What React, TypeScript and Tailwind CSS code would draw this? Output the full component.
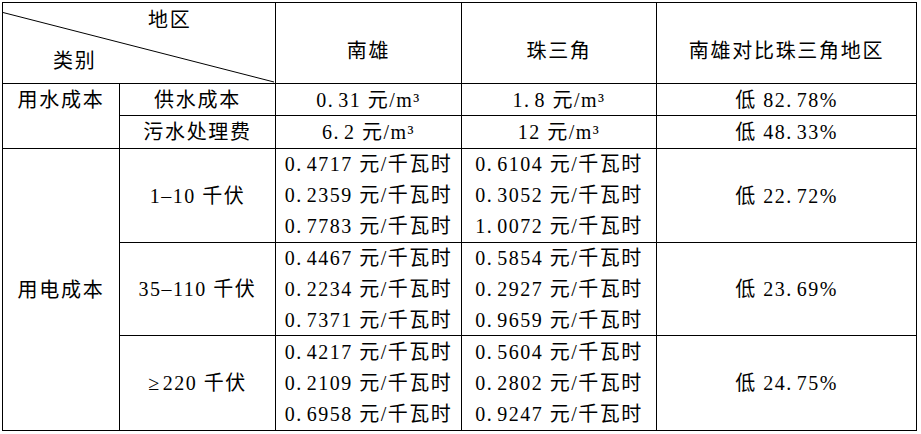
import React from "react";

const font = {
  fontFamily: '"Liberation Serif", "Noto Sans CJK SC", serif',
};

function Num({ text }: { text: string }) {
  const parts = text.split(".");
  if (parts.length === 1) return <>{text}</>;
  return (
    <>
      {parts[0]}
      <span className="tracking-[5.5px]">.</span>
      {parts.slice(1).join(".")}
    </>
  );
}

function Cell({
  className = "",
  children,
}: {
  className?: string;
  children?: React.ReactNode;
}) {
  return (
    <div
      className={
        "bg-white flex items-center justify-center text-center whitespace-nowrap " +
        className
      }
    >
      {children}
    </div>
  );
}

function Lines({ items }: { items: string[] }) {
  return (
    <div className="flex flex-col items-center leading-[31px]">
      {items.map((t) => (
        <div key={t} className="whitespace-nowrap">
          <Num text={t} />
        </div>
      ))}
    </div>
  );
}

export default function App() {
  return (
    <div
      className="bg-white w-[921px] h-[434px] pt-[2px] pl-[2px] text-black text-[20px] tracking-[1.5px]"
      style={font}
    >
      <div className="grid w-[915px] bg-black p-px gap-px grid-cols-[116px_155px_185px_194px_259px] grid-rows-[80px_31px_32px_93px_92px_94px]">
        {/* header diagonal cell */}
        <div className="col-span-2 bg-white relative">
          <svg
            className="absolute inset-0"
            width="271"
            height="80"
            viewBox="0 0 271 80"
          >
            <line
              x1="0"
              y1="9.5"
              x2="271"
              y2="79"
              stroke="black"
              strokeWidth="1"
            />
          </svg>
          <div className="relative flex flex-col leading-[20px] tracking-[1.7px]">
            <div className="pl-[145px] pt-[7px]">地区</div>
            <div className="pl-[50px] pt-[21px]">类别</div>
          </div>
        </div>
        <Cell className="pt-[15px] tracking-[1.7px]">南雄</Cell>
        <Cell className="pt-[15px] tracking-[1.7px]">珠三角</Cell>
        <Cell className="pt-[15px] tracking-[1.7px]">南雄对比珠三角地区</Cell>

        {/* water */}
        <div className="row-span-2 bg-white flex justify-center pt-[3px] leading-[26px] tracking-[1.7px]">
          用水成本
        </div>
        <Cell className="tracking-[1.7px]">供水成本</Cell>
        <Cell>
          <Num text="0.31 元/m³" />
        </Cell>
        <Cell>
          <Num text="1.8 元/m³" />
        </Cell>
        <Cell>
          <Num text="低 82.78%" />
        </Cell>

        <Cell className="tracking-[1.7px]">污水处理费</Cell>
        <Cell>
          <Num text="6.2 元/m³" />
        </Cell>
        <Cell>12 元/m³</Cell>
        <Cell>
          <Num text="低 48.33%" />
        </Cell>

        {/* electricity */}
        <Cell className="row-span-3 tracking-[1.7px]">用电成本</Cell>
        <Cell>1–10 千伏</Cell>
        <Cell>
          <Lines
            items={["0.4717 元/千瓦时", "0.2359 元/千瓦时", "0.7783 元/千瓦时"]}
          />
        </Cell>
        <Cell>
          <Lines
            items={["0.6104 元/千瓦时", "0.3052 元/千瓦时", "1.0072 元/千瓦时"]}
          />
        </Cell>
        <Cell>
          <Num text="低 22.72%" />
        </Cell>

        <Cell>35–110 千伏</Cell>
        <Cell>
          <Lines
            items={["0.4467 元/千瓦时", "0.2234 元/千瓦时", "0.7371 元/千瓦时"]}
          />
        </Cell>
        <Cell>
          <Lines
            items={["0.5854 元/千瓦时", "0.2927 元/千瓦时", "0.9659 元/千瓦时"]}
          />
        </Cell>
        <Cell>
          <Num text="低 23.69%" />
        </Cell>

        <Cell>
          <span className="mr-[2px]">≥</span>220 千伏
        </Cell>
        <Cell>
          <Lines
            items={["0.4217 元/千瓦时", "0.2109 元/千瓦时", "0.6958 元/千瓦时"]}
          />
        </Cell>
        <Cell>
          <Lines
            items={["0.5604 元/千瓦时", "0.2802 元/千瓦时", "0.9247 元/千瓦时"]}
          />
        </Cell>
        <Cell>
          <Num text="低 24.75%" />
        </Cell>
      </div>
    </div>
  );
}
